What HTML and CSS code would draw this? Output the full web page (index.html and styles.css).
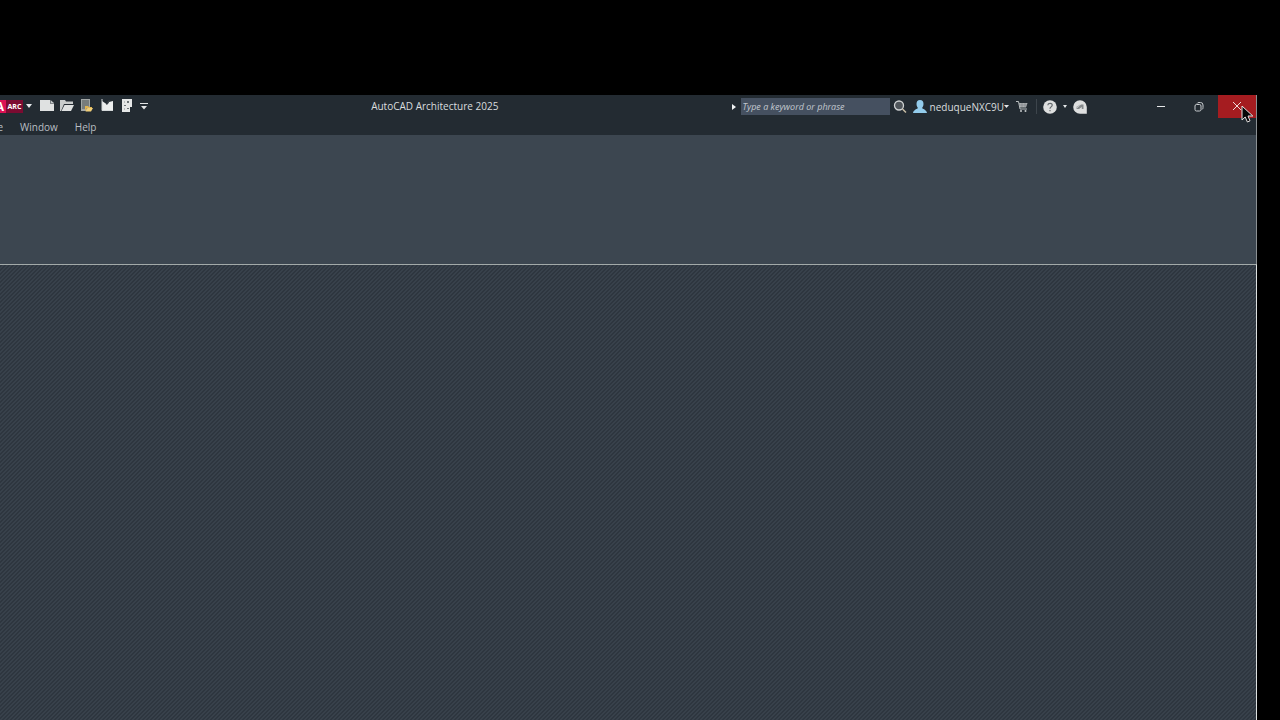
FILE: index.html
```html
<!DOCTYPE html>
<html lang="en">
<head>
<meta charset="utf-8">
<title>AutoCAD Architecture 2025</title>
<link rel="stylesheet" href="styles.css">
</head>
<body>
<div class="app">
  <header class="titlebar">
    <div class="quick">
      <button class="brand" aria-label="Application menu"><span class="brand-a">A</span><span class="brand-tag">ARC</span>
        <svg class="brand-caret" width="6" height="4" viewBox="0 0 6 4"><path d="M0 0h6L3 4z" fill="#e8ebed"/></svg></button>
      <button class="tool" aria-label="New"><svg width="14" height="14" viewBox="0 0 14 14"><path d="M0 1h10v3.500h4V12H0z" fill="#dfe1e1"/><path d="M10.500 1L14 4h-3.500z" fill="#c5c9ca"/></svg></button>
      <button class="tool" aria-label="Open"><svg width="14" height="14" viewBox="0 0 14 14"><path d="M0 12V1h5l1 1.500h7V5H4L1 12z" fill="#c9cccc"/><path d="M4.500 6H14l-3 6H1.500z" fill="#dfe1e1"/></svg></button>
      <button class="tool" aria-label="Open from mobile"><svg width="14" height="14" viewBox="0 0 14 14"><path d="M1 0h9v12H1z" fill="#a2a6a5"/><path d="M2 1h7v9H2z" fill="#777c7c"/><path d="M5 12V7h3l1 1h3v1H7z" fill="#e0b452"/><path d="M7.500 9H13L11 12.500H5.500z" fill="#f2cf77"/></svg></button>
      <button class="tool" aria-label="Project browser"><svg width="14" height="14" viewBox="0 0 14 14"><path d="M2 2l3 2 2 1.500L9 3l4-1v10H2z" fill="#eceeee"/><path d="M2 0v11.500h11" fill="none" stroke="#d4d8d9"/><path d="M6 6l2-4 2-1-2 4z" fill="#384148"/></svg></button>
      <button class="tool" aria-label="Sheet set"><svg width="14" height="14" viewBox="0 0 14 14"><path d="M2 0h10v8h-2v5H2z" fill="#e5e7e7"/><path d="M7 2h2v2H7zM4 6h2v1H4zM7 9h2v1H7z" fill="#6c7376"/><path d="M4 3h1M4 10h1" stroke="#8c9395"/></svg></button>
      <button class="more" aria-label="Customize toolbar"><svg width="8" height="7" viewBox="0 0 8 7"><path d="M0 .5h8" stroke="#e2e4e5"/><path d="M1 3h6L4 6.500z" fill="#e2e4e5"/></svg></button>
    </div>
    <h1 class="title">AutoCAD Architecture 2025</h1>
    <div class="services">
      <button class="expand" aria-label="Collapse search"><svg width="4" height="6" viewBox="0 0 4 6"><path d="M0 0v6l4-3z" fill="#f0f2f3"/></svg></button>
      <input class="search" type="text" aria-label="Search help" placeholder="Type a keyword or phrase">
      <button class="find" aria-label="Search"><svg width="14" height="14" viewBox="0 0 14 14"><circle cx="6" cy="5.500" r="4.500" fill="#50565b" stroke="#d0d3d4" stroke-width="1.300"/><path d="M9.500 9l3.500 3.500" stroke="#c9bda5" stroke-width="1.500"/></svg></button>
      <button class="user"><svg width="14" height="14" viewBox="0 0 14 14"><path d="M7 0a3.500 4 0 0 1 3.500 4c0 2-1 3.500-1.500 4 .5 1 4.500 1.500 5 5H0c.5-3.500 4.500-4 5-5-.5-.5-1.500-2-1.500-4A3.500 4 0 0 1 7 0z" fill="#93ccec"/></svg><span class="user-name">neduqueNXC9U</span><svg width="5" height="3" viewBox="0 0 5 3"><path d="M0 0h5L2.500 3z" fill="#e4e7e8"/></svg></button>
      <button class="cart" aria-label="App store"><svg width="12" height="12" viewBox="0 0 12 12"><path d="M0 .5h2.500L4 8h7" fill="none" stroke="#b9bebf"/><path d="M3 2h8.500L10 6.500H4z" fill="#aaafb0"/><path d="M4 4h7M6 2v4M9 2v4" stroke="#747b80" stroke-width=".5"/><circle cx="5" cy="10" r="1" fill="#c5c9ca"/><circle cx="9.500" cy="10" r="1" fill="#c5c9ca"/></svg></button>
      <span class="divider"></span>
      <button class="help" aria-label="Help"><svg width="14" height="14" viewBox="0 0 14 14"><circle cx="7" cy="7" r="6.800" fill="#dedfdf"/><path d="M4.800 5.300C5 2.800 9.300 2.800 9.200 5.200 9.100 7 7 6.800 7 8.700M7 10v1.300" fill="none" stroke="#64696d" stroke-width="1.200"/></svg>
        <svg width="4" height="3" viewBox="0 0 4 3"><path d="M0 0h4L2 3z" fill="#e4e7e8"/></svg></button>
      <button class="assist" aria-label="Autodesk assistant"><svg width="14" height="14" viewBox="0 0 14 14"><path d="M7 .2a6.800 6.800 0 0 1 6.800 6.800v6.800H7A6.800 6.800 0 0 1 7 .2z" fill="#dedfdf"/><path d="M3 9l5-4.500h2.500V9H8.800V7L6 9z" fill="#85898b"/><path d="M3 7.500L7 5" stroke="#b2b5b6"/></svg></button>
    </div>
    <div class="window-controls">
      <button class="win" aria-label="Minimize"><svg width="10" height="10" viewBox="0 0 10 10"><path d="M1 4.500h8" stroke="#e5e7e8"/></svg></button>
      <button class="win" aria-label="Restore"><svg width="10" height="10" viewBox="0 0 10 10"><rect x="1" y="2.500" width="6" height="6.500" rx="1.500" fill="none" stroke="#c8cccf"/><path d="M3 1.500Q3.500.5 5 .5h1.500Q9 .5 9 3v2.500Q9 7 8 7.500" fill="none" stroke="#c8cccf"/></svg></button>
      <button class="win close" aria-label="Close"><svg width="10" height="10" viewBox="0 0 10 10"><path d="M1 0l8 8M9 0L1 8" stroke="#f0d9d8"/></svg>
        <svg class="pointer" width="13" height="18" viewBox="0 0 13 18"><path d="M1 1v14l3.200-3 2.200 5 2.600-1.200L7 11h4.800z" fill="#080808" stroke="#e5e2e2"/></svg></button>
    </div>
  </header>
  <nav class="menubar">
    <button class="menu clipped" aria-label="Express">e</button>
    <button class="menu">Window</button>
    <button class="menu">Help</button>
  </nav>
  <section class="ribbon" aria-label="Ribbon"></section>
  <main class="canvas"></main>
</div>
</body>
</html>
```
FILE: styles.css
```css
* { box-sizing: border-box; }

body {
  margin: 0;
  background: #000;
  color: #d9dddf;
  font: 10px/14px "Open Sans", "Noto Sans", sans-serif;
}

button {
  display: flex;
  align-items: center;
  padding: 0;
  border: 0;
  background: none;
  color: inherit;
  font: inherit;
}

svg { display: block; flex: none; }

.app {
  display: flex;
  flex-direction: column;
  min-height: 100vh;
  padding: 95px 23px 0 0;
}

.titlebar {
  display: flex;
  height: 23px;
  background: #232b32;
  border-right: 1px solid #8b9093;
}

.quick, .services { display: flex; align-items: center; }

.quick { padding-bottom: 1px; }

.brand { height: 13px; margin-right: 8px; }

.brand-a {
  display: flex;
  justify-content: flex-end;
  width: 6px;
  height: 13px;
  padding-right: 2px;
  overflow: hidden;
  background: #dc1254;
  color: #fff;
  font-size: 12px;
  font-weight: 700;
  line-height: 13px;
}

.brand-tag {
  width: 17px;
  height: 13px;
  background: #7b0b31;
  color: #fff;
  font-size: 7px;
  font-weight: 700;
  line-height: 13px;
  text-align: center;
}

.brand-caret { margin-left: 3px; }

.tool { margin-right: 6px; }

.title {
  flex: 1;
  margin: 0;
  padding-right: 10px;
  font-size: 10px;
  font-weight: 400;
  line-height: 23px;
  text-align: center;
}

.search {
  width: 149px;
  height: 17px;
  margin: 0 3px 0 5px;
  padding: 0 2px;
  border: 0;
  background: #455060;
  color: #d9dddf;
  font: italic 9px/17px "Open Sans", "Noto Sans", sans-serif;
}

.search::placeholder { color: #c2c8cf; opacity: 1; }

.user { margin-left: 6px; }
.user-name { margin-left: 3px; }
.cart { margin-left: 7px; }
.divider { width: 1px; height: 15px; margin: 0 6px 0 8px; background: #3d454c; }
.help { gap: 6px; }
.assist { margin-left: 6px; }

.window-controls { display: flex; margin-left: 55px; }

.win { justify-content: center; width: 38px; }

.close { position: relative; background: #a51c20; }

.pointer { position: absolute; top: 10px; left: 23px; }

.menubar {
  display: flex;
  gap: 17px;
  height: 17px;
  background: #232b32;
  border-right: 1px solid #8b9093;
  color: #b9bfc3;
}

.clipped { width: 3px; overflow: hidden; justify-content: flex-end; }

.ribbon {
  height: 129px;
  background: #3c4650;
  border-right: 1px solid #8b9093;
}

.canvas {
  flex: 1;
  border-top: 1px solid #a3aaa9;
  border-right: 1px solid #dce0e0;
  background: linear-gradient(135deg, #2e363f 25%, #38414b 25% 50%, #2e363f 50% 75%, #38414b 75%) 0 0 / 4px 4px;
}
```
